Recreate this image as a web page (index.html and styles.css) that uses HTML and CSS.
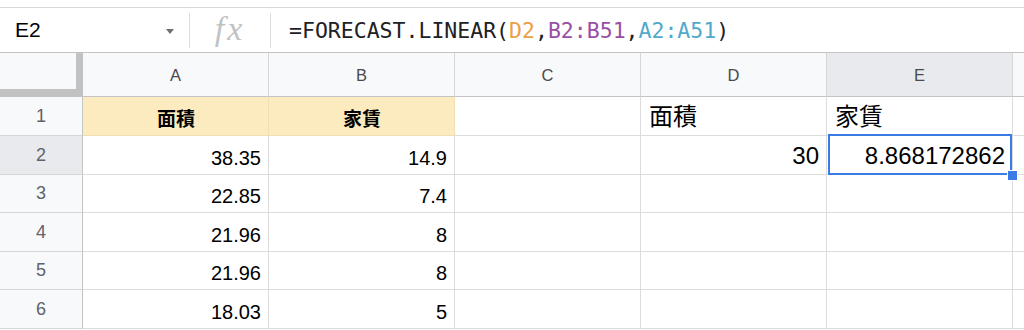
FILE: index.html
```html
<!DOCTYPE html>
<html lang="ja">
  <head>
    <meta charset="UTF-8" />
    <meta name="viewport" content="width=device-width, initial-scale=1.0" />
    <title>FORECAST.LINEAR</title>
    <link rel="stylesheet" href="styles.css">
  </head>
  <body>
    <div class="top"></div>

    <div class="fbar">
      <div class="namebox">
        <span class="name">E2</span>
        <span class="caret"></span>
      </div>
      <div class="fx">fx</div>
      <div class="formula">=FORECAST.LINEAR(<span class="r1">D2</span>,<span class="r2">B2:B51</span>,<span class="r3">A2:A51</span>)</div>
    </div>

    <div class="sheet">
      <div class="corner"></div>
      <div class="ch">A</div>
      <div class="ch">B</div>
      <div class="ch">C</div>
      <div class="ch">D</div>
      <div class="ch sel">E</div>
      <div class="ch"></div>

      <div class="rh">1</div>
      <div class="c head">面積</div>
      <div class="c head">家賃</div>
      <div class="c"></div>
      <div class="c big">面積</div>
      <div class="c big">家賃</div>
      <div class="c"></div>

      <div class="rh sel">2</div>
      <div class="c num">38.35</div>
      <div class="c num">14.9</div>
      <div class="c"></div>
      <div class="c num big">30</div>
      <div class="c num big active">8.868172862<span class="handle"></span></div>
      <div class="c"></div>

      <div class="rh">3</div>
      <div class="c num">22.85</div>
      <div class="c num">7.4</div>
      <div class="c"></div>
      <div class="c"></div>
      <div class="c"></div>
      <div class="c"></div>

      <div class="rh">4</div>
      <div class="c num">21.96</div>
      <div class="c num">8</div>
      <div class="c"></div>
      <div class="c"></div>
      <div class="c"></div>
      <div class="c"></div>

      <div class="rh">5</div>
      <div class="c num">21.96</div>
      <div class="c num">8</div>
      <div class="c"></div>
      <div class="c"></div>
      <div class="c"></div>
      <div class="c"></div>

      <div class="rh">6</div>
      <div class="c num">18.03</div>
      <div class="c num">5</div>
      <div class="c"></div>
      <div class="c"></div>
      <div class="c"></div>
      <div class="c"></div>
    </div>
  </body>
</html>
```

FILE: styles.css
```css
* {
  padding: 0;
  margin: 0;
  box-sizing: border-box;
}
body {
  width: 1024px;
  height: 330px;
  overflow: hidden;
  background: #fff;
  font-family: "Liberation Sans", Arial, "Noto Sans CJK JP", sans-serif;
  color: #000;
}

.top {
  height: 8px;
  border-bottom: 1px solid #d6d8db;
}

/* formula bar */
.fbar {
  height: 45px;
  display: flex;
  align-items: center;
  border-bottom: 1px solid #c4c4c4;
}
.namebox {
  width: 190px;
  height: 35px;
  display: flex;
  align-items: center;
  padding-left: 15px;
  padding-right: 15px;
  border-right: 1px solid #dadce0;
}
.name {
  flex: 1;
  font-size: 21px;
}
.caret {
  width: 0;
  height: 0;
  border-left: 4px solid transparent;
  border-right: 4px solid transparent;
  border-top: 5px solid #707070;
  margin-top: 2px;
}
.fx {
  width: 81px;
  height: 35px;
  display: flex;
  align-items: center;
  justify-content: center;
  border-right: 1px solid #dadce0;
  font-family: "Liberation Serif", serif;
  font-style: italic;
  font-size: 34px;
  letter-spacing: 3px;
  color: #c0c3c6;
  padding-bottom: 3px;
}
.formula {
  padding-left: 18px;
  font-family: "DejaVu Sans Mono", monospace;
  font-size: 21.5px;
  color: #202124;
}
.r1 { color: #eaa046; }
.r2 { color: #9a4fa6; }
.r3 { color: #52a9cb; }

/* grid */
.sheet {
  display: grid;
  grid-template-columns: 83px repeat(5, 186px) 1fr;
  grid-template-rows: 44px 39px 39px 38px 39px 38px 39px;
}
.corner {
  background: #f8f9fa;
  border-right: 7px solid #c2c2c2;
  border-bottom: 8px solid #c2c2c2;
}
.ch {
  display: flex;
  align-items: center;
  justify-content: center;
  background: #f8f9fa;
  border-right: 1px solid #d6d6d6;
  border-bottom: 1px solid #c4c4c4;
  font-size: 16.5px;
  color: #4a4a4a;
  padding-top: 2px;
}
.rh {
  display: flex;
  align-items: center;
  justify-content: center;
  background: #f8f9fa;
  border-right: 1px solid #c4c4c4;
  border-bottom: 1px solid #d6d6d6;
  font-size: 18px;
  color: #5f6368;
}
.sel {
  background: #e8eaed;
}
.c {
  position: relative;
  display: flex;
  align-items: flex-end;
  padding: 0 7px 6px 8px;
  border-right: 1px solid #dcdcdc;
  border-bottom: 1px solid #dcdcdc;
  font-size: 20px;
  line-height: 1;
}
.head {
  justify-content: center;
  background: #fcebbe;
  border-color: #f0dfb2;
  font-family: "Noto Sans CJK JP", sans-serif;
  font-weight: bold;
  font-size: 19px;
  padding-bottom: 8px;
}
.big {
  font-size: 24px;
}
.num {
  justify-content: flex-end;
}
.active::after {
  content: "";
  position: absolute;
  top: -2px;
  left: 1px;
  right: 0;
  bottom: -1px;
  border: 2px solid #3b7be6;
}
.handle {
  position: absolute;
  right: -6px;
  bottom: -7px;
  width: 11px;
  height: 11px;
  background: #3b7be6;
  border: 1px solid #fff;
  z-index: 2;
}
```
